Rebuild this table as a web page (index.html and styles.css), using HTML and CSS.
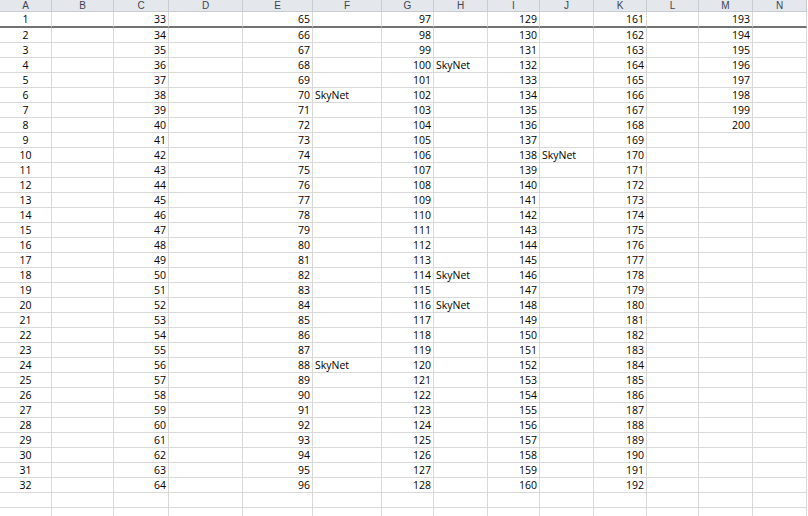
FILE: index.html
```html
<!DOCTYPE html>
<html>
<head>
<meta charset="utf-8">
<link rel="stylesheet" href="styles.css">
</head>
<body>
<div class="sheet">
<div class="row head"><span>A</span><span>B</span><span>C</span><span>D</span><span>E</span><span>F</span><span>G</span><span>H</span><span>I</span><span>J</span><span>K</span><span>L</span><span>M</span><span>N</span></div>
<div class="row first"><span>1</span><span></span><span>33</span><span></span><span>65</span><span></span><span>97</span><span></span><span>129</span><span></span><span>161</span><span></span><span>193</span><span></span></div>
<div class="row"><span>2</span><span></span><span>34</span><span></span><span>66</span><span></span><span>98</span><span></span><span>130</span><span></span><span>162</span><span></span><span>194</span><span></span></div>
<div class="row"><span>3</span><span></span><span>35</span><span></span><span>67</span><span></span><span>99</span><span></span><span>131</span><span></span><span>163</span><span></span><span>195</span><span></span></div>
<div class="row"><span>4</span><span></span><span>36</span><span></span><span>68</span><span></span><span>100</span><span>SkyNet</span><span>132</span><span></span><span>164</span><span></span><span>196</span><span></span></div>
<div class="row"><span>5</span><span></span><span>37</span><span></span><span>69</span><span></span><span>101</span><span></span><span>133</span><span></span><span>165</span><span></span><span>197</span><span></span></div>
<div class="row"><span>6</span><span></span><span>38</span><span></span><span>70</span><span>SkyNet</span><span>102</span><span></span><span>134</span><span></span><span>166</span><span></span><span>198</span><span></span></div>
<div class="row"><span>7</span><span></span><span>39</span><span></span><span>71</span><span></span><span>103</span><span></span><span>135</span><span></span><span>167</span><span></span><span>199</span><span></span></div>
<div class="row"><span>8</span><span></span><span>40</span><span></span><span>72</span><span></span><span>104</span><span></span><span>136</span><span></span><span>168</span><span></span><span>200</span><span></span></div>
<div class="row"><span>9</span><span></span><span>41</span><span></span><span>73</span><span></span><span>105</span><span></span><span>137</span><span></span><span>169</span><span></span><span></span><span></span></div>
<div class="row"><span>10</span><span></span><span>42</span><span></span><span>74</span><span></span><span>106</span><span></span><span>138</span><span>SkyNet</span><span>170</span><span></span><span></span><span></span></div>
<div class="row"><span>11</span><span></span><span>43</span><span></span><span>75</span><span></span><span>107</span><span></span><span>139</span><span></span><span>171</span><span></span><span></span><span></span></div>
<div class="row"><span>12</span><span></span><span>44</span><span></span><span>76</span><span></span><span>108</span><span></span><span>140</span><span></span><span>172</span><span></span><span></span><span></span></div>
<div class="row"><span>13</span><span></span><span>45</span><span></span><span>77</span><span></span><span>109</span><span></span><span>141</span><span></span><span>173</span><span></span><span></span><span></span></div>
<div class="row"><span>14</span><span></span><span>46</span><span></span><span>78</span><span></span><span>110</span><span></span><span>142</span><span></span><span>174</span><span></span><span></span><span></span></div>
<div class="row"><span>15</span><span></span><span>47</span><span></span><span>79</span><span></span><span>111</span><span></span><span>143</span><span></span><span>175</span><span></span><span></span><span></span></div>
<div class="row"><span>16</span><span></span><span>48</span><span></span><span>80</span><span></span><span>112</span><span></span><span>144</span><span></span><span>176</span><span></span><span></span><span></span></div>
<div class="row"><span>17</span><span></span><span>49</span><span></span><span>81</span><span></span><span>113</span><span></span><span>145</span><span></span><span>177</span><span></span><span></span><span></span></div>
<div class="row"><span>18</span><span></span><span>50</span><span></span><span>82</span><span></span><span>114</span><span>SkyNet</span><span>146</span><span></span><span>178</span><span></span><span></span><span></span></div>
<div class="row"><span>19</span><span></span><span>51</span><span></span><span>83</span><span></span><span>115</span><span></span><span>147</span><span></span><span>179</span><span></span><span></span><span></span></div>
<div class="row"><span>20</span><span></span><span>52</span><span></span><span>84</span><span></span><span>116</span><span>SkyNet</span><span>148</span><span></span><span>180</span><span></span><span></span><span></span></div>
<div class="row"><span>21</span><span></span><span>53</span><span></span><span>85</span><span></span><span>117</span><span></span><span>149</span><span></span><span>181</span><span></span><span></span><span></span></div>
<div class="row"><span>22</span><span></span><span>54</span><span></span><span>86</span><span></span><span>118</span><span></span><span>150</span><span></span><span>182</span><span></span><span></span><span></span></div>
<div class="row"><span>23</span><span></span><span>55</span><span></span><span>87</span><span></span><span>119</span><span></span><span>151</span><span></span><span>183</span><span></span><span></span><span></span></div>
<div class="row"><span>24</span><span></span><span>56</span><span></span><span>88</span><span>SkyNet</span><span>120</span><span></span><span>152</span><span></span><span>184</span><span></span><span></span><span></span></div>
<div class="row"><span>25</span><span></span><span>57</span><span></span><span>89</span><span></span><span>121</span><span></span><span>153</span><span></span><span>185</span><span></span><span></span><span></span></div>
<div class="row"><span>26</span><span></span><span>58</span><span></span><span>90</span><span></span><span>122</span><span></span><span>154</span><span></span><span>186</span><span></span><span></span><span></span></div>
<div class="row"><span>27</span><span></span><span>59</span><span></span><span>91</span><span></span><span>123</span><span></span><span>155</span><span></span><span>187</span><span></span><span></span><span></span></div>
<div class="row"><span>28</span><span></span><span>60</span><span></span><span>92</span><span></span><span>124</span><span></span><span>156</span><span></span><span>188</span><span></span><span></span><span></span></div>
<div class="row"><span>29</span><span></span><span>61</span><span></span><span>93</span><span></span><span>125</span><span></span><span>157</span><span></span><span>189</span><span></span><span></span><span></span></div>
<div class="row"><span>30</span><span></span><span>62</span><span></span><span>94</span><span></span><span>126</span><span></span><span>158</span><span></span><span>190</span><span></span><span></span><span></span></div>
<div class="row"><span>31</span><span></span><span>63</span><span></span><span>95</span><span></span><span>127</span><span></span><span>159</span><span></span><span>191</span><span></span><span></span><span></span></div>
<div class="row"><span>32</span><span></span><span>64</span><span></span><span>96</span><span></span><span>128</span><span></span><span>160</span><span></span><span>192</span><span></span><span></span><span></span></div>
<div class="row"><span></span><span></span><span></span><span></span><span></span><span></span><span></span><span></span><span></span><span></span><span></span><span></span><span></span><span></span></div>
<div class="row"><span></span><span></span><span></span><span></span><span></span><span></span><span></span><span></span><span></span><span></span><span></span><span></span><span></span><span></span></div>
</div>
</body>
</html>
```

FILE: styles.css
```css
html, body {
  margin: 0;
  padding: 0;
  background: #ffffff;
  overflow: hidden;
}

.sheet {
  display: grid;
  grid-template-columns: 52px 62px 55px 74px 70px 69px 52px 54px 52px 54px 53px 52px 54px 54px;
  grid-template-rows: 12px 16px;
  grid-auto-rows: 15px;
  width: 807px;
  font-family: "Open Sans", "Liberation Sans", sans-serif;
  font-size: 10.5px;
  color: #000000;
}

.row {
  display: contents;
}

.row > span {
  box-sizing: border-box;
  border-right: 1px solid #d9d9d9;
  border-bottom: 1px solid #d9d9d9;
  padding: 0 2px;
  line-height: 14px;
  white-space: nowrap;
  overflow: visible;
  text-align: left;
}

.row > span:nth-child(odd) {
  text-align: right;
}

.row > span:nth-child(1) {
  text-align: center;
}

.row.first > span {
  border-bottom: 2px solid #727272;
}

.row.head > span {
  background: #e4e7eb;
  border-right-color: #c8ccd1;
  border-bottom: 0;
  box-shadow: inset 0 -1px 0 #c8ccd1;
  color: #3c4450;
  text-align: center;
  font-family: "Liberation Sans", Arial, sans-serif;
  font-size: 10px;
  line-height: 12px;
}
```
